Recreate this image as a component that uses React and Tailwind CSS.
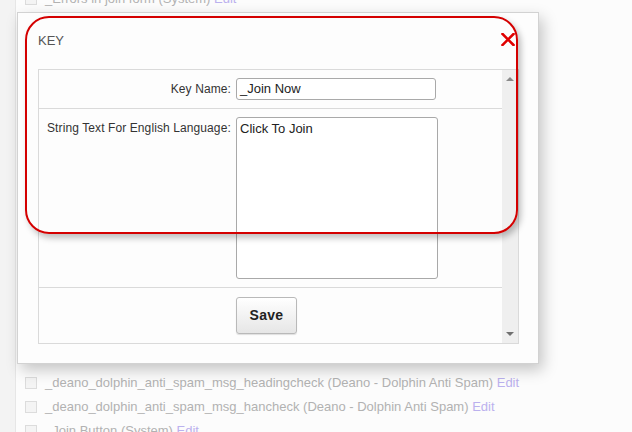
import React from "react";

const rows = [
  { name: "_Errors in join form", mod: "System" },
  { name: "_Email or password is incorrect", mod: "System", hidden: true },
  { name: "_FieldError_Email_Mandatory", mod: "System", hidden: true },
  { name: "_FieldError_NickName_Min", mod: "System", hidden: true },
  { name: "_FieldError_Password_Min", mod: "System", hidden: true },
  { name: "_Join Now", mod: "System", hidden: true },
  { name: "_Join_now", mod: "System", hidden: true },
  { name: "_join_page_header", mod: "System", hidden: true },
  { name: "_Join_Step1", mod: "System", hidden: true },
  { name: "_Join_Step2", mod: "System", hidden: true },
  { name: "_Join_Step3", mod: "System", hidden: true },
  { name: "_join_complete", mod: "System", hidden: true },
  { name: "_join_h", mod: "System", hidden: true },
  { name: "_join_msg", mod: "System", hidden: true },
  { name: "_join_sub", mod: "System", hidden: true },
  { name: "_join_text", mod: "System", hidden: true },
  { name: "_deano_dolphin_anti_spam_msg_headingcheck", mod: "Deano - Dolphin Anti Spam" },
  { name: "_deano_dolphin_anti_spam_msg_hancheck", mod: "Deano - Dolphin Anti Spam" },
  { name: "_Join Button", mod: "System" },
];

// rows sitting under the modal are not drawn, the dialog covers them anyway
function ListRow({ name, mod, hidden }) {
  return (
    <div className={`flex h-[24px] items-center ${hidden ? "invisible" : ""}`}>
      <span className="ml-[26px] h-[12px] w-[12px] border border-[#dcdcdc] bg-[#f4f4f4]" />
      <span className="ml-[8px] whitespace-nowrap text-[13px] text-[#b2b2b2]">
        {name} ({mod}) <span className="text-[#bbb1ee]">Edit</span>
      </span>
    </div>
  );
}

export default function App() {
  return (
    <div
      className="relative h-[432px] w-[632px] overflow-hidden bg-[#fcfcfc]"
      style={{ fontFamily: '"Liberation Sans", Arial, sans-serif' }}
    >
      <div className="flex h-full">
        <div className="w-[16px] shrink-0 border-r border-[#e6e6e6] bg-[#f3f3f3]" />
        <div className="-mt-[13px] -ml-[17px]">
          {rows.map((r, i) => (
            <ListRow key={i} {...r} />
          ))}
        </div>
      </div>

      {/* modal */}
      <div className="absolute left-[17px] top-[12px] flex h-[352px] w-[522px] flex-col border border-[#d2d2d2] bg-[#fdfdfd] shadow-[4px_6px_14px_rgba(0,0,0,0.22)]">
        <div className="ml-[20px] mt-[21px] text-[13px] leading-[14px] text-[#555]">KEY</div>
        <div className="ml-[20px] mt-[21px] flex h-[275px] w-[481px] border border-[#dadada]">
          <div className="flex flex-1 flex-col text-[12px] text-[#333]">
            <div className="flex items-center border-b border-[#dadada] py-[8px]">
              <div className="w-[197px] pr-[5px] text-right tracking-[0.1px]">Key Name:</div>
              <div className="flex h-[22px] w-[200px] items-center rounded-[3px] border border-[#a9a9a9] bg-white px-[3px] text-[13px] text-[#222]">
                _Join Now
              </div>
            </div>
            <div className="flex items-start border-b border-[#dadada] py-[8px]">
              <div className="w-[197px] pl-[8px] pt-[2px] text-left tracking-[0.1px]">String Text For English Language:</div>
              <div className="h-[162px] w-[202px] rounded-[3px] border border-[#a9a9a9] bg-white px-[3px] pt-[1px] text-[13px] text-[#222]">
                Click To Join
              </div>
            </div>
            <div className="flex flex-1 items-center">
              <div className="w-[197px]" />
              <button
                type="button"
                className="h-[37px] w-[61px] rounded-[3px] border border-[#b9b9b9] bg-gradient-to-b from-[#ffffff] to-[#e6e6e6] text-[14px] font-bold tracking-[0.3px] text-[#222] shadow-[0_1px_1px_rgba(0,0,0,0.12)]"
              >
                Save
              </button>
            </div>
          </div>
          <div className="flex w-[16px] flex-col items-center justify-between bg-[#efefef] py-[6px]">
            <svg width="8" height="5" viewBox="0 0 8 5">
              <path d="M0 5 L4 1 L8 5 Z" fill="#8a8a8a" />
            </svg>
            <svg width="8" height="5" viewBox="0 0 8 5">
              <path d="M0 0 L8 0 L4 4 Z" fill="#707070" />
            </svg>
          </div>
        </div>
      </div>

      {/* red annotation */}
      <div className="absolute left-[25px] top-[16px] h-[218px] w-[493px] rounded-[24px] border-2 border-[#d40000] shadow-[3px_4px_6px_rgba(0,0,0,0.25)]" />
      <svg className="absolute left-[501px] top-[33px]" width="14" height="13" viewBox="0 0 14 13">
        <path d="M1.5 1 L12.5 12 M12.5 1 L1.5 12" stroke="#e00000" strokeWidth="2.6" strokeLinecap="square" />
      </svg>
    </div>
  );
}
